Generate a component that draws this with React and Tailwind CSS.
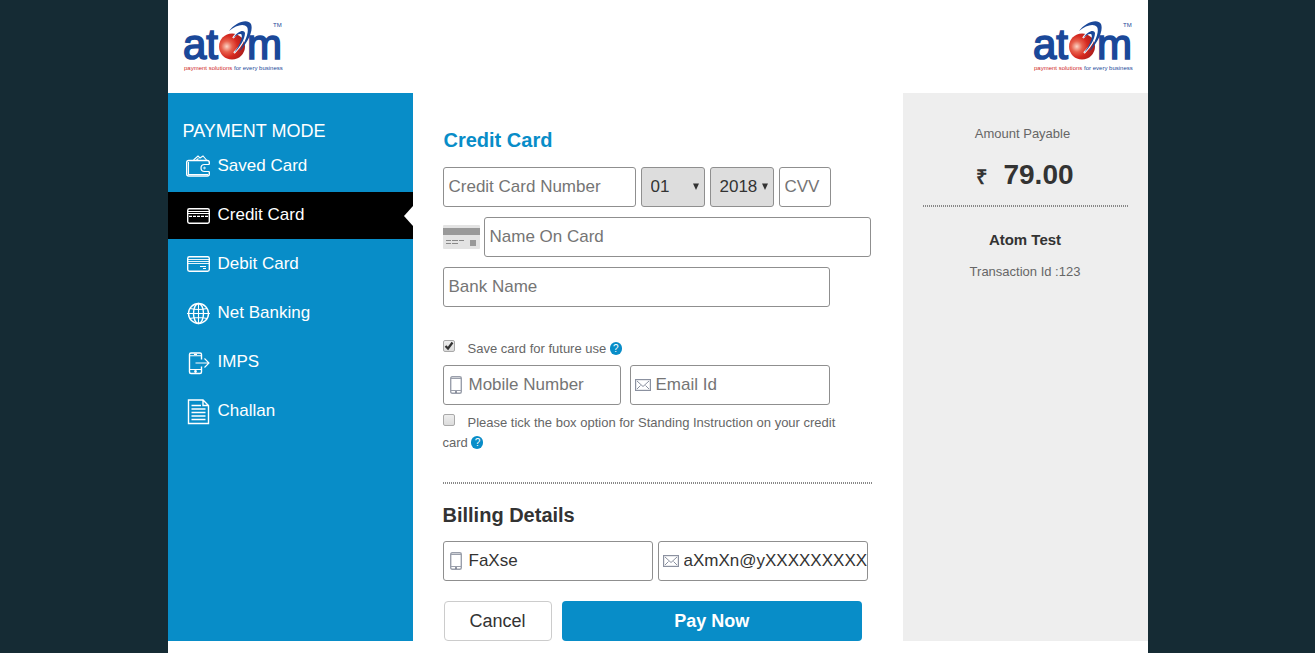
const modes = [
    { label: 'Saved Card', icon: WalletIcon },
    { label: 'Credit Card', icon: CreditIcon, active: true },
    { label: 'Debit Card', icon: DebitIcon },
    { label: 'Net Banking', icon: GlobeIcon },
    { label: 'IMPS', icon: ImpsIcon },
    { label: 'Challan', icon: ChallanIcon },
];

const field = 'h-10 rounded-[3px] border border-[#8f8f8f] text-[17px] text-[#333] placeholder:text-[#757575] outline-none';

function Logo() {
    return (
        <svg viewBox="0 0 100 54" className="h-[54px] w-[100px]" role="img" aria-label="atom payment solutions for every business">
            <defs>
                <radialGradient id="ball" cx="0.3" cy="0.5" r="0.7">
                    <stop offset="0" stopColor="#fbd5c6" />
                    <stop offset="0.3" stopColor="#e8604c" />
                    <stop offset="0.6" stopColor="#d5281f" />
                    <stop offset="1" stopColor="#a81c1c" />
                </radialGradient>
            </defs>
            <g fill="#1a4899" stroke="#1a4899" strokeWidth="1.6" fontFamily="'Liberation Sans', Arial, sans-serif" fontSize="42">
                <text x="0" y="39">at</text>
                <text x="64" y="39">m</text>
            </g>
            <text x="90" y="7" fontSize="6" fill="#1a4899" fontFamily="'Liberation Sans', Arial, sans-serif">TM</text>
            <circle cx="49" cy="26.500" r="13" fill="url(#ball)" />
            <path d="M46 11C52 3 64 -2 68 4C71 12 63 25 55 33C61 24 67 12 64 7C61 3 53 5 46 11Z" fill="#1a4899" />
            <path d="M50 18C55 11 61 9 62 13C62 19 57 27 51 33" fill="none" stroke="#fff" strokeWidth="2" />
            <path d="M50 18C55 11 61 9 62 13C62 19 57 27 51 33C56 26 60 18 58.500 14.500C57 13 53 15 50 18Z" fill="#1a4899" />
            <text x="1" y="50" fontSize="6" fontFamily="'Liberation Sans', Arial, sans-serif">
                <tspan fill="#cf2a2a">payment solutions</tspan>
                <tspan fill="#1a4899"> for every business</tspan>
            </text>
        </svg>
    );
}

function Icon({ children }) {
    return (
        <svg viewBox="0 0 24 26" className="h-[26px] w-6 shrink-0" fill="none" stroke="currentColor" strokeWidth="1.4" aria-hidden="true">
            {children}
        </svg>
    );
}

function WalletIcon() {
    return (
        <Icon>
            <path d="M23.300 10.500V8.500Q23.300 6.500 21.300 6.500H2.700Q.7 6.500 .7 8.500V20Q.7 22 2.700 22H21.300Q23.300 22 23.300 20V17.500" />
            <path d="M2.500 8V20.500H22M7.500 6L12 2L14 4L17 2L20.500 6M10.500 6L12.500 4.500" strokeWidth="1.100" />
            <path d="M23.300 10.500H18.500A3.500 3.500 0 0 0 18.500 17.500H23.300" strokeWidth="1.200" />
            <circle cx="18.500" cy="14" r="0.800" strokeWidth="1" />
        </Icon>
    );
}

function CreditIcon() {
    return (
        <Icon>
            <rect x="1.700" y="5.700" width="21.600" height="14.500" rx="1.700" />
            <path d="M2 8.500H23M2 10.500H23" strokeWidth="1" />
            <path d="M3 13.300H22" strokeWidth="1.200" strokeDasharray="3 1" />
        </Icon>
    );
}

function DebitIcon() {
    return (
        <Icon>
            <rect x="1.700" y="4.700" width="21.600" height="14.500" rx="1.700" />
            <path d="M2 7.500H23M2 9.500H23M2 11.500H23" strokeWidth="0.9" />
            <path d="M14 14.500H20M17 16.500H20" strokeWidth="1" />
        </Icon>
    );
}

function GlobeIcon() {
    return (
        <Icon>
            <circle cx="12.500" cy="12.500" r="10" />
            <ellipse cx="12.500" cy="12.500" rx="5" ry="10" />
            <path d="M12.500 2.500V22.500M1 12.500H24M4 7.500Q12.500 9.500 21 7.500M4 17.500Q12.500 15.500 21 17.500" strokeWidth="1.100" />
        </Icon>
    );
}

function ImpsIcon() {
    return (
        <Icon>
            <path d="M15.500 9.500V4.500Q15.500 3 14 3H5Q3.500 3 3.500 4.500V22Q3.500 23.500 5 23.500H14Q15.500 23.500 15.500 22V16.500" />
            <path d="M3.500 5.800H15.500M3.500 19.500H15.500M8 4.400H11M9.500 13H23M18.500 8.500L23 13L18.500 17.500" strokeWidth="1.100" />
            <circle cx="9.500" cy="21.500" r="0.700" />
        </Icon>
    );
}

function ChallanIcon() {
    return (
        <Icon>
            <path d="M2.500 1H17L22.500 6.500V24.500H2.500ZM17 1V6.500H22.500" />
            <path d="M5.500 6.500H15M5.500 10H19.500M5.500 13.500H19.500M5.500 17H19.500M5.500 20.500H19.500" strokeWidth="1.700" />
        </Icon>
    );
}

function PhoneGlyph() {
    return (
        <svg viewBox="0 0 12 18" className="absolute top-[11px] left-[7px] h-[18px] w-3" fill="none" stroke="#9a9fab" strokeWidth="1.400" aria-hidden="true">
            <rect x="0.700" y="0.700" width="10.600" height="16.600" rx="1.500" />
            <path d="M1 2.500H11M1 14.500H11" strokeWidth="1" />
            <path d="M5 16H7" stroke="#6f7584" />
        </svg>
    );
}

function MailGlyph() {
    return (
        <svg viewBox="0 0 16 12" className="absolute top-[14px] left-[5px] h-3 w-4" fill="none" stroke="#8b91a0" aria-hidden="true">
            <rect x="0.600" y="0.600" width="14.800" height="10.800" strokeWidth="1.200" />
            <path d="M2 2L8 7.500L14 2M2 10L5.500 6.500M14 10L10.500 6.500" />
        </svg>
    );
}

function IconField({ glyph: Glyph, width, ...rest }) {
    return (
        <div className={`relative ${width}`}>
            <Glyph />
            <input className={`${field} w-full pl-[25px]`} {...rest} />
        </div>
    );
}

function Picker({ label, value }) {
    return (
        <div className="relative w-[64px]">
            <select aria-label={label} defaultValue={value} className={`${field} w-full appearance-none bg-[#ddd] pl-[9px]`}>
                <option>{value}</option>
            </select>
            <svg viewBox="0 0 6 7" className="pointer-events-none absolute top-4 right-1.5 h-[7px] w-1.5" fill="#333" aria-hidden="true">
                <path d="M0 0.500H6L3 7Z" />
            </svg>
        </div>
    );
}

function Tick({ id, checked }) {
    return (
        <span className="relative mr-[13px] inline-block h-3 w-3 align-[1px]">
            <input
                id={id}
                type="checkbox"
                defaultChecked={checked}
                className="peer block h-3 w-3 appearance-none rounded-[2px] border border-[#a9a9a9] bg-linear-to-b from-[#eee] to-[#dcdcdc]"
            />
            <svg viewBox="0 0 12 12" className="pointer-events-none absolute inset-0 hidden h-3 w-3 peer-checked:block" fill="none" stroke="#333" strokeWidth="2.200" aria-hidden="true">
                <path d="M2.500 6L5 8.500L9.500 2.500" />
            </svg>
        </span>
    );
}

function Help() {
    return (
        <button type="button" aria-label="Help" className="h-[13px] w-3 rounded-full bg-[#088dc8] text-center align-[1px] text-[10px] leading-[13px] text-white">
            ?
        </button>
    );
}

function DottedRule() {
    return <div className="h-0.5 bg-[repeating-linear-gradient(90deg,#888_0_1px,transparent_1px_2px)]" />;
}

export default function App() {
    return (
        <div className="min-h-screen bg-[#152b34] font-['Liberation_Sans',Arial,sans-serif] text-[#333]">
            <div className="mx-auto min-h-screen w-full max-w-[980px] bg-white">
                <header className="flex h-[93px] justify-between px-[15px] pt-5">
                    <Logo />
                    <Logo />
                </header>

                <div className="grid grid-cols-[1fr_2fr_1fr]">
                    <nav className="bg-[#088dc8] pt-[26px] text-white">
                        <h2 className="px-[15px] text-[18px] leading-6">PAYMENT MODE</h2>
                        <ul className="flex flex-col gap-0.5">
                            {modes.map((item) => (
                                <li key={item.label}>
                                    <a href="#" className={`relative flex h-[47px] items-center gap-2 pl-[18px] text-[17px] ${item.active ? 'bg-black' : ''}`}>
                                        <item.icon />
                                        <span className="pb-0.5">{item.label}</span>
                                        {item.active && (
                                            <svg viewBox="0 0 9 20" className="absolute top-[14px] right-0 h-5 w-[9px]" fill="#fff" aria-hidden="true">
                                                <path d="M9 0V20L0 10Z" />
                                            </svg>
                                        )}
                                    </a>
                                </li>
                            ))}
                        </ul>
                    </nav>

                    <main className="px-[30px] pt-[35px]">
                        <form>
                            <h1 className="pl-px text-[20px] leading-6 font-bold text-[#088dc8]">Credit Card</h1>
                            <div className="mt-[15px] flex gap-[5px]">
                                <input aria-label="Credit Card Number" placeholder="Credit Card Number" className={`${field} w-[193px] pl-[5px]`} />
                                <Picker label="Expiry month" value="01" />
                                <Picker label="Expiry year" value="2018" />
                                <input aria-label="CVV" placeholder="CVV" className={`${field} w-[52px] pl-[5px]`} />
                            </div>
                            <div className="mt-2.5 flex items-center gap-1">
                                <svg viewBox="0 0 37 24" className="h-6 w-[37px] shrink-0" aria-hidden="true">
                                    <rect width="37" height="24" rx="1" fill="#e3e3e3" />
                                    <path d="M0 3H37V10H0Z" fill="#999" />
                                    <path d="M3 15.500H8M9 15.500H15M16 15.500H21M3 18.500H8M9 18.500H15" stroke="#888" />
                                    <rect x="27" y="15" width="6" height="6" fill="#999" />
                                </svg>
                                <input aria-label="Name On Card" placeholder="Name On Card" className={`${field} w-[90%] pl-[5px]`} />
                            </div>
                            <input aria-label="Bank Name" placeholder="Bank Name" className={`${field} mt-2.5 block w-[90%] pl-[5px]`} />

                            <p className="mt-8 text-[13px] leading-5 text-[#666]">
                                <Tick id="save" checked />
                                <label htmlFor="save">Save card for future use</label> <Help />
                            </p>
                            <div className="mt-1.5 flex gap-[9px]">
                                <IconField glyph={PhoneGlyph} width="w-[178px]" aria-label="Mobile Number" placeholder="Mobile Number" />
                                <IconField glyph={MailGlyph} width="w-[200px]" aria-label="Email Id" placeholder="Email Id" />
                            </div>
                            <p className="mt-2 pr-[30px] text-[13px] leading-5 text-[#666]">
                                <Tick id="standing" />
                                <label htmlFor="standing">Please tick the box option for Standing Instruction on your credit card</label> <Help />
                            </p>

                            <div className="mt-[29px]">
                                <DottedRule />
                            </div>

                            <h2 className="mt-[19px] text-[20px] leading-6 font-bold">Billing Details</h2>
                            <div className="mt-3.5 flex gap-[5px]">
                                <IconField glyph={PhoneGlyph} width="w-[210px]" aria-label="Billing name" defaultValue="FaXse" />
                                <IconField glyph={MailGlyph} width="w-[210px]" aria-label="Billing email" defaultValue="aXmXn@yXXXXXXXXX" />
                            </div>
                            <div className="mt-5 flex gap-2.5 pl-px">
                                <button type="button" className="h-10 w-[108px] rounded-[4px] border border-[#ccc] text-[18px]">Cancel</button>
                                <button type="submit" className="h-10 w-[70%] rounded-[4px] bg-[#088dc8] text-[18px] font-bold text-white">Pay Now</button>
                            </div>
                        </form>
                    </main>

                    <aside className="bg-[#eee] px-5 pt-[31px] text-center">
                        <p className="pr-[5px] text-[13px] leading-5 text-[#666]">Amount Payable</p>
                        <p className="mt-[15px] flex items-baseline justify-center gap-4 leading-8 font-bold">
                            <span className="text-[20px]">₹</span>
                            <span className="text-[28px]">79.00</span>
                        </p>
                        <div className="mt-3">
                            <DottedRule />
                        </div>
                        <p className="mt-[23px] text-[15px] leading-5 font-bold">Atom Test</p>
                        <p className="mt-3 text-[13px] leading-5 text-[#666]">Transaction Id :123</p>
                    </aside>
                </div>
            </div>
        </div>
    );
}
